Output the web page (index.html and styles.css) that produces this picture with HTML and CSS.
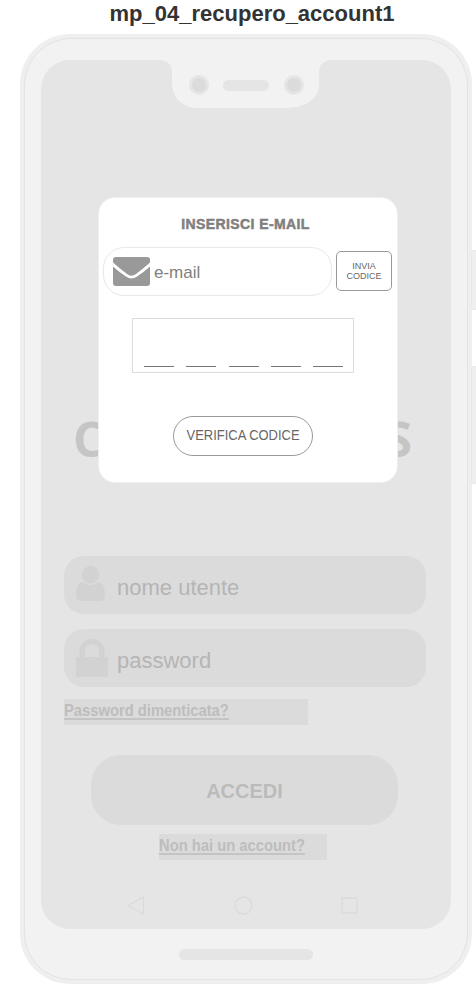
FILE: index.html
```html
<!DOCTYPE html>
<html lang="it">
<head>
<meta charset="utf-8">
<title>mp_04_recupero_account1</title>
<link rel="stylesheet" href="styles.css">
</head>
<body>
<h1 class="title">mp_04_recupero_account1</h1>
<main class="phone">
  <i class="side-button power"></i>
  <i class="side-button volume"></i>
  <div class="bezel">
    <div class="screen">
      <div class="notch">
        <svg class="notch-shape" width="163" height="48" viewBox="0 0 163 48"><path d="M0 0Q12 1 12 12V23C12 37 22 48 38 48H126C144 48 159 39 159 26V12Q159 1 171 0Z" fill="#f2f2f2"/></svg>
        <i class="camera"></i><i class="speaker"></i><i class="camera"></i>
      </div>
      <div class="brand"><span>C</span><span>S</span></div>
      <div class="field">
        <svg class="user-icon" width="29" height="35" viewBox="0 0 29 35"><circle cx="14.5" cy="8.7" r="8.7"/><path d="M6.5 16Q14.5 22.5 22.5 16C27 16.500 29 22 29 29Q29 35 24 35H5Q0 35 0 29C0 22 2 16.500 6.500 16Z"/></svg>
        <span>nome utente</span>
      </div>
      <div class="field">
        <svg class="lock-icon" width="32" height="38" viewBox="0 0 32 38"><path d="M3.500 18V12.500a12.500 12.500 0 0 1 25 0V18H30q2 0 2 2v16q0 2-2 2H2q-2 0-2-2V20q0-2 2-2ZM9 18H23V12a7 7 0 0 0-14 0Z"/></svg>
        <span>password</span>
      </div>
      <div class="link forgot"><span>Password dimenticata?</span></div>
      <div class="login">ACCEDI</div>
      <div class="link register"><span>Non hai un account?</span></div>
      <nav class="navigation">
        <svg width="18" height="19" viewBox="0 0 18 19"><path d="M16.500 1L1 9.500L16.500 18Z"/></svg>
        <svg width="19" height="19" viewBox="0 0 19 19"><circle cx="9.500" cy="9.500" r="8.500"/></svg>
        <svg width="17" height="17" viewBox="0 0 17 17"><path d="M1 1H16V16H1Z"/></svg>
      </nav>
    </div>
    <i class="chin"></i>
  </div>
  <section class="dialog">
    <h2><span>INSERISCI E-MAIL</span></h2>
    <div class="email-row">
      <div class="email">
        <svg width="37" height="29" viewBox="0 0 37 29"><path d="M3 0H34Q37 0 37 3V5.500Q31 11 23 17Q18.500 20.500 14 17Q6 11 0 5.500V3Q0 0 3 0ZM0 9.500Q6 15 13 19.500Q18.500 23.500 24 19.500Q31 15 37 9.500V26Q37 29 34 29H3Q0 29 0 26Z"/></svg>
        <span>e-mail</span>
      </div>
      <div class="send">INVIA<br>CODICE</div>
    </div>
    <div class="code"><i></i><i></i><i></i><i></i><i></i></div>
    <div class="verify"><span>VERIFICA CODICE</span></div>
  </section>
</main>
</body>
</html>
```
FILE: styles.css
```css
* { box-sizing: border-box; }
body { margin: 0; width: 476px; height: 984px; overflow: hidden; background: #fff; font-family: "Liberation Sans", Arial, sans-serif; }
span { white-space: nowrap; }
.title { margin: 0; padding-left: 28px; height: 34px; font-size: 22px; line-height: 28px; text-align: center; color: #333; }
.phone { position: relative; width: 452px; height: 950px; margin-left: 20px; padding: 4px; border-radius: 50px; background: #efefef; }
.bezel { height: 942px; padding: 21px 16px 0; border: 1px solid #e3e3e3; border-radius: 47px; background: #f2f2f2; }
.side-button { position: absolute; left: 451px; width: 8px; border: 1px solid #e9e9e9; border-radius: 3px; background: #efefef; }
.power { top: 216px; height: 60px; }
.volume { top: 332px; height: 118px; }
.screen { width: 410px; height: 869px; border-radius: 29px; background: #e5e5e5; display: flex; flex-direction: column; }
.notch { position: relative; height: 50px; margin-left: 148px; display: flex; align-items: center; gap: 14px; }
.notch .camera:last-child { margin-left: 1px; }
.notch-shape { position: absolute; left: -29px; top: 0; overflow: visible; }
.camera { position: relative; width: 20px; height: 20px; border: 3px solid #e5e5e5; border-radius: 50%; background: #dbdbdb; }
.speaker { position: relative; width: 46px; height: 11px; border-radius: 6px; background: #e5e5e5; }
.brand { height: 60px; margin: 300px 39px 0 32px; display: flex; justify-content: space-between; font: 700 48px/58px "Open Sans", sans-serif; color: #c5c5c5; }
.field { width: 362px; height: 58px; margin: 86px 0 0 23px; padding-left: 12px; border-radius: 20px; background: #dbdbdb; display: flex; align-items: center; color: #b5b5b5; font-size: 22px; }
.field + .field { margin-top: 15px; }
.field svg { fill: #d2d2d2; }
.field span { padding-top: 5px; }
.user-icon { margin: 0 12px 3px 0; }
.lock-icon { margin-right: 9px; }
.link { height: 26px; background: #dbdbdb; font-size: 17px; line-height: 23px; font-weight: bold; color: #bdbdbd; }
.link span { display: inline-block; height: 21px; border-bottom: 2px solid #c4c4c4; transform-origin: left; transform: scaleX(.868); }
.forgot { width: 244px; margin: 12px 0 0 23px; }
.register { width: 168px; margin: 9px 0 0 118px; }
.login { width: 307px; height: 70px; margin: 30px 0 0 50px; border-radius: 30px; background: #dbdbdb; text-align: center; font-weight: bold; font-size: 20px; line-height: 72px; color: #bbb; }
.navigation { height: 19px; margin: 36px 93px 0 86px; display: flex; justify-content: space-between; align-items: center; }
.navigation svg { fill: none; stroke: #dadada; stroke-width: 1.3; stroke-linejoin: round; }
.chin { display: block; width: 134px; height: 11px; margin: 20px 0 0 138px; border-radius: 6px; background: #e5e5e5; }
.dialog { position: absolute; left: 78px; top: 163px; width: 300px; height: 286px; padding: 16px 5px 0 4px; border: 1px solid #eee; border-radius: 17px; background: #fff; color: #777; }
.dialog h2 { margin: 0; height: 33px; padding-right: 4px; text-align: center; font: 900 14px/20px "Liberation Sans", sans-serif; letter-spacing: .4px; color: #808080; }
.dialog h2 span { -webkit-text-stroke: .5px #808080; }
.email-row { display: flex; align-items: center; justify-content: space-between; }
.email { width: 229px; height: 49px; padding-left: 9px; display: flex; align-items: center; gap: 4px; border: 1px solid #e8e8e8; border-radius: 21px; font-size: 17px; color: #808080; }
.email svg { fill: #999; }
.email span { padding-top: 2px; }
.send { width: 56px; height: 40px; margin-bottom: 2px; padding-top: 9px; border: 1px solid #999; border-radius: 5px; text-align: center; font-size: 9px; line-height: 10px; color: #666; }
.code { width: 222px; height: 55px; margin: 22px 0 0 29px; padding: 0 10px 5px 11px; border: 1px solid #dcdcdc; display: flex; align-items: flex-end; justify-content: space-between; }
.code i { width: 30px; height: 1px; background: #777; }
.verify { width: 140px; height: 40px; margin: 43px 0 0 70px; padding-bottom: 2px; border: 1px solid #999; border-radius: 20px; display: flex; align-items: center; justify-content: center; font-size: 14px; color: #666; }
.verify span { transform: scaleX(.925); }
```
